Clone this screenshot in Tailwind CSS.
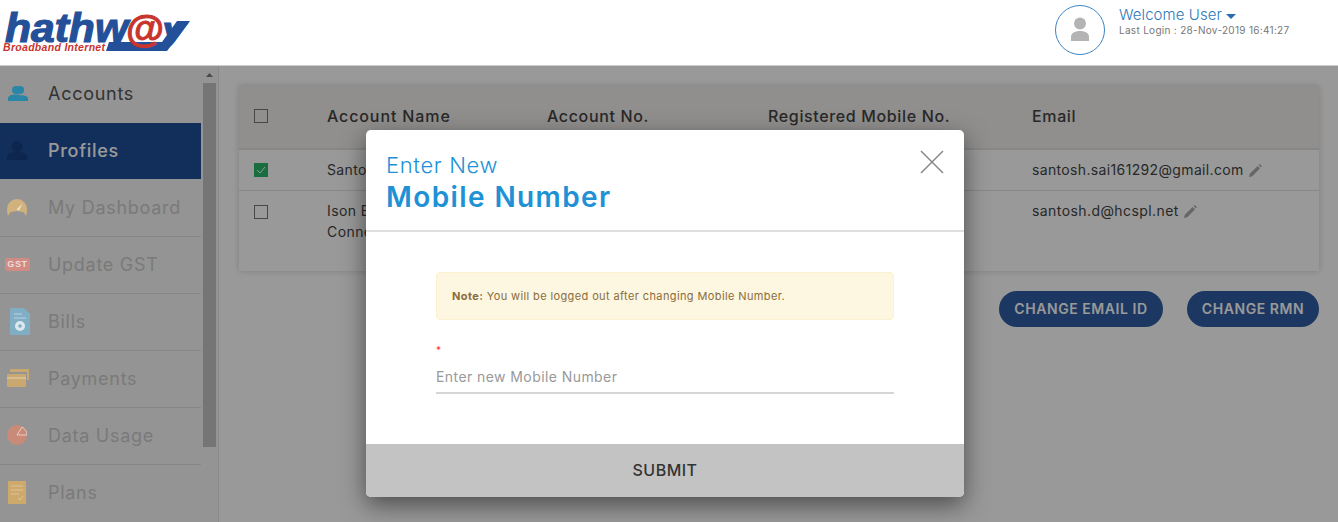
<!DOCTYPE html>
<html lang="en">

<head>
    <meta charset="UTF-8">
    <meta name="viewport" content="width=device-width, initial-scale=1.0">
    <script src="https://cdn.jsdelivr.net/npm/@tailwindcss/browser@4"></script>
    <title>Hathway - Profiles</title>
</head>

<body class="h-[522px] overflow-hidden bg-white font-['Inter','Open_Sans',sans-serif] text-[#444]">

    <!-- Header -->
    <header class="relative z-30 flex h-[66px] items-start justify-between border-b border-[#ccc] bg-white">
        <svg class="ml-[2px] mt-[11px] h-[42px] w-[190px] overflow-visible" viewBox="0 0 190 42">
            <text x="3" y="30.500" font-family="Liberation Sans" font-weight="700" font-style="italic" font-size="41" textLength="123" lengthAdjust="spacingAndGlyphs" fill="#24509a" stroke="#24509a" stroke-width="1.200">hathw</text>
            <polygon points="104,40 165,40 188,10 175,10 160,31 107,31" fill="#24509a" />
            <text x="124" y="31" font-family="Liberation Sans" font-weight="700" font-size="39" fill="#c9342d" stroke="#c9342d" stroke-width="0.900">@</text>
            <text x="160" y="30" font-family="Liberation Sans" font-weight="700" font-style="italic" font-size="34" fill="#24509a" stroke="#24509a" stroke-width="0.800" textLength="24" lengthAdjust="spacingAndGlyphs">y</text>
            <text x="1" y="40" font-family="Liberation Sans" font-weight="700" font-style="italic" font-size="10.500" fill="#c9342d" textLength="102" lengthAdjust="spacing">Broadband Internet</text>
        </svg>
        <div class="mr-[49px] mt-[5px] flex w-[234px] gap-[14px]">
            <div class="flex h-[50px] w-[50px] shrink-0 items-center justify-center rounded-full border border-[#3d84c2]">
                <svg class="h-[26px] w-[20px]" viewBox="0 0 20 26" fill="#b4b4b4">
                    <circle cx="10" cy="6.500" r="6" />
                    <path d="M1 24v-4c0-4 4-6 9-6s9 2 9 6v4z" />
                </svg>
            </div>
            <div class="pt-[2px]">
                <div class="flex items-center gap-[4px] text-[15px] leading-[16px] tracking-[0.005em] font-light text-[#2f78b8]">
                    Welcome User
                    <svg class="mt-[2px] h-[5px] w-[10px]" viewBox="0 0 10 5" fill="#2b6cb0"><path d="M0 0h10L5 5z" /></svg>
                </div>
                <div class="whitespace-nowrap text-[10px] leading-[14px] tracking-[0.03em] text-[#777]">Last Login : 28-Nov-2019 16:41:27</div>
            </div>
        </div>
    </header>

    <div class="flex h-[456px]">
        <!-- Sidebar -->
        <aside class="flex w-[219px] shrink-0 border-r border-[#e8e8e8] bg-[#f7f7f7]">
            <nav class="w-[201px] shrink-0 text-[18px] tracking-[0.04em] text-[#ccc]">
                <a class="flex h-[57px] items-center pb-[2px] text-[#555]">
                    <span class="relative z-20 flex w-[48px] justify-start pl-[8px]">
                        <svg class="h-[15px] w-[20px]" viewBox="0 0 20 15" fill="#2a86a6">
                            <circle cx="12" cy="4" r="4" />
                            <circle cx="8" cy="4" r="4" />
                            <path d="M0 15v-2.500c0-2.500 3-4 8-4 2 0 3.500.3 4.500.8 4.500 0 7.500 1 7.500 3.200V15z" />
                        </svg>
                    </span>
                    Accounts
                </a>
                <a class="flex h-[56px] items-center bg-[#1f4f99] pb-[2px] font-medium text-white">
                    <span class="relative z-20 flex w-[48px] justify-start pl-[7px]">
                        <svg class="h-[19px] w-[20px]" viewBox="0 0 20 19" fill="#0c2650">
                            <circle cx="10" cy="5.500" r="5.500" />
                            <path d="M0 19v-3c0-3 4-5 10-5s10 2 10 5v3z" />
                        </svg>
                    </span>
                    Profiles
                </a>
                <a class="flex h-[58px] items-center border-b border-[#e0e0e0] pb-[1px]">
                    <span class="relative z-20 flex w-[48px] justify-start pl-[7px]">
                        <svg class="h-[17px] w-[20px]" viewBox="0 0 20 17">
                            <path d="M0 10a10 10 0 0 1 20 0c0 2.500-.5 5-1 7-1-2-2-3.500-3-4l-6-1-6 1c-1 .5-2 2-3 4-.5-2-1-4.500-1-7z" fill="#d2b27c" />
                            <path d="M9.500 10.500l6-6-3.500 7z" fill="#ece0c8" />
                        </svg>
                    </span>
                    My Dashboard
                </a>
                <a class="flex h-[57px] items-center border-b border-[#e0e0e0] pb-[2px]">
                    <span class="relative z-20 flex w-[48px] justify-start pl-[5px]">
                        <span class="flex h-[13px] w-[25px] items-center justify-center rounded-[2px] bg-[#cf8b84] font-['Liberation_Sans'] text-[9px] font-bold leading-none text-[#eddcda]">GST</span>
                    </span>
                    Update GST
                </a>
                <a class="flex h-[57px] items-center border-b border-[#e0e0e0] pb-[2px]">
                    <span class="relative z-20 flex w-[48px] justify-start pl-[10px]">
                        <svg class="h-[27px] w-[20px]" viewBox="0 0 20 27">
                            <path d="M1 0h13l6 6v20a1 1 0 0 1-1 1H1a1 1 0 0 1-1-1V1a1 1 0 0 1 1-1z" fill="#7faec5" />
                            <path d="M4 6h8M4 10h12" stroke="#a8c8d8" stroke-width="1.500" />
                            <circle cx="10" cy="18" r="5" fill="#dbe8ee" />
                            <circle cx="10" cy="18" r="1.800" fill="#7faec5" />
                        </svg>
                    </span>
                    Bills
                </a>
                <a class="flex h-[57px] items-center border-b border-[#e0e0e0] pb-[2px]">
                    <span class="relative z-20 flex w-[48px] justify-start pl-[7px]">
                        <svg class="h-[18px] w-[22px]" viewBox="0 0 22 18">
                            <path d="M3 0h19v11h-2V3H3z" fill="#caa872" />
                            <rect x="0" y="5" width="19" height="13" rx="1" fill="#caa872" />
                            <path d="M0 9h19" stroke="#e0cba8" stroke-width="1.200" />
                        </svg>
                    </span>
                    Payments
                </a>
                <a class="flex h-[57px] items-center border-b border-[#e0e0e0] pb-[2px]">
                    <span class="relative z-20 flex w-[48px] justify-start pl-[7px]">
                        <svg class="h-[20px] w-[20px]" viewBox="0 0 20 20">
                            <circle cx="10" cy="10" r="10" fill="#c98a78" />
                            <path d="M10 10l5-8a10 10 0 0 1 5 8z" fill="#c98a78" stroke="#e6cfc6" stroke-width="1" />
                        </svg>
                    </span>
                    Data Usage
                </a>
                <a class="flex h-[57px] items-center pb-[2px]">
                    <span class="relative z-20 flex w-[48px] justify-start pl-[8px]">
                        <svg class="h-[23px] w-[18px]" viewBox="0 0 18 23">
                            <rect width="18" height="23" fill="#cda96c" />
                            <path d="M3 5h12M3 9h12M3 13h8" stroke="#dcc49a" stroke-width="1" />
                            <path d="M10 17l2 2 3-4" stroke="#dcc49a" stroke-width="1" fill="none" />
                        </svg>
                    </span>
                    Plans
                </a>
            </nav>
            <!-- Scrollbar -->
            <div class="ml-[2px] w-[13px] shrink-0">
                <div class="flex h-[17px] items-center justify-center">
                    <svg class="h-[4px] w-[7px]" viewBox="0 0 7 4" fill="#7a7a7a"><path d="M3.500 0L7 4H0z" /></svg>
                </div>
                <div class="h-[364px] bg-[#c4c4c4]"></div>
            </div>
        </aside>

        <!-- Content -->
        <main class="flex-1 bg-white pl-[20px] pr-[19px] pt-[20px] text-[14px]">
            <div class="h-[185px] bg-white shadow-[0_0_6px_rgba(0,0,0,0.18)]">
                <div class="grid h-[64px] grid-cols-[88px_220px_221px_264px_1fr] items-center border-b-2 border-[#e2e2e2] bg-[#f0eeeb] pb-[2px] text-[16px] font-medium tracking-[0.04em] text-[#444]">
                    <span class="ml-[15px] h-[14px] w-[14px] border border-[#777]"></span>
                    <span class="tracking-[0.055em]">Account Name</span>
                    <span>Account No.</span>
                    <span>Registered Mobile No.</span>
                    <span>Email</span>
                </div>
                <div class="grid h-[41px] grid-cols-[88px_220px_221px_264px_1fr] items-center border-b border-[#e2e2e2] pb-[1px] tracking-[0.025em]">
                    <span class="ml-[15px] mt-[1px] flex h-[14px] w-[14px] items-center justify-center bg-[#2bb769]">
                        <svg class="h-[8px] w-[10px]" viewBox="0 0 10 8" fill="none" stroke="#fff" stroke-width="1"><path d="M1 4l3 3 5-6" /></svg>
                    </span>
                    <span>Santosh Sai</span>
                    <span></span>
                    <span></span>
                    <span class="flex items-center gap-[5px]">santosh.sai161292@gmail.com
                        <svg class="mt-[2px] h-[13px] w-[13px]" viewBox="0 0 12 12" fill="#aaa"><path d="M0 12l.8-3L8 1.800 10.200 4 3 11.200zM9 1l1-1 2 2-1 1z" /></svg>
                    </span>
                </div>
                <div class="grid grid-cols-[88px_220px_221px_264px_1fr] pt-[9px] tracking-[0.03em] leading-[21px]">
                    <span class="ml-[15px] mt-[5px] h-[14px] w-[14px] border border-[#777]"></span>
                    <span>Ison Broadband<br>Connection</span>
                    <span></span>
                    <span></span>
                    <span class="flex h-[21px] items-center gap-[5px]">santosh.d@hcspl.net
                        <svg class="mt-[2px] h-[13px] w-[13px]" viewBox="0 0 12 12" fill="#aaa"><path d="M0 12l.8-3L8 1.800 10.200 4 3 11.200zM9 1l1-1 2 2-1 1z" /></svg>
                    </span>
                </div>
            </div>
            <div class="mt-[20px] flex justify-end gap-[24px] text-[14px] font-semibold tracking-[0.04em] text-white">
                <button class="h-[36px] w-[164px] rounded-full bg-[#2e5ca3] pb-[2px]">CHANGE EMAIL ID</button>
                <button class="h-[36px] w-[132px] rounded-full bg-[#2e5ca3] pb-[2px]">CHANGE RMN</button>
            </div>
        </main>
    </div>

    <!-- Overlay -->
    <div class="absolute inset-x-0 bottom-0 top-[66px] z-10 h-[456px] bg-black/40"></div>

    <!-- Modal -->
    <div class="absolute left-[366px] top-[130px] z-20 w-[598px] overflow-hidden rounded-[5px] bg-white shadow-[0_8px_24px_rgba(0,0,0,0.5)]">
        <div class="relative h-[102px] border-b-2 border-[#e0e0e0] pl-[20px] pt-[21px] text-[#2191d6]">
            <div class="text-[22px] font-light leading-[28px] tracking-[0.03em]">Enter New</div>
            <div class="text-[28px] font-semibold leading-[36px] tracking-[0.05em]">Mobile Number</div>
            <svg class="absolute right-[20px] top-[20px] h-[24px] w-[24px]" viewBox="0 0 24 24" stroke="#888" stroke-width="1.500"><path d="M1 1l22 22M23 1L1 23" /></svg>
        </div>
        <div class="h-[212px] px-[70px] pt-[40px]">
            <div class="flex h-[48px] items-center rounded-[4px] border border-[#fbf0d0] bg-[#fdf6e1] px-[15px] text-[11px] tracking-[0.035em] text-[#8a6d3b]">
                <p><b class="font-bold">Note:</b> You will be logged out after changing Mobile Number.</p>
            </div>
            <div class="mt-[27px] h-[6px] text-[10px] leading-[6px] text-[#f33]">*</div>
            <div class="mt-[11px] flex h-[30px] items-center border-b-2 border-[#d6d6d6] pb-[4px] text-[14px] tracking-[0.03em] text-[#999]">Enter new Mobile Number</div>
        </div>
        <button class="block h-[53px] w-full bg-[#c3c3c3] pb-[2px] text-[16px] font-medium tracking-[0.03em] text-[#333]">SUBMIT</button>
    </div>

</body>

</html>
